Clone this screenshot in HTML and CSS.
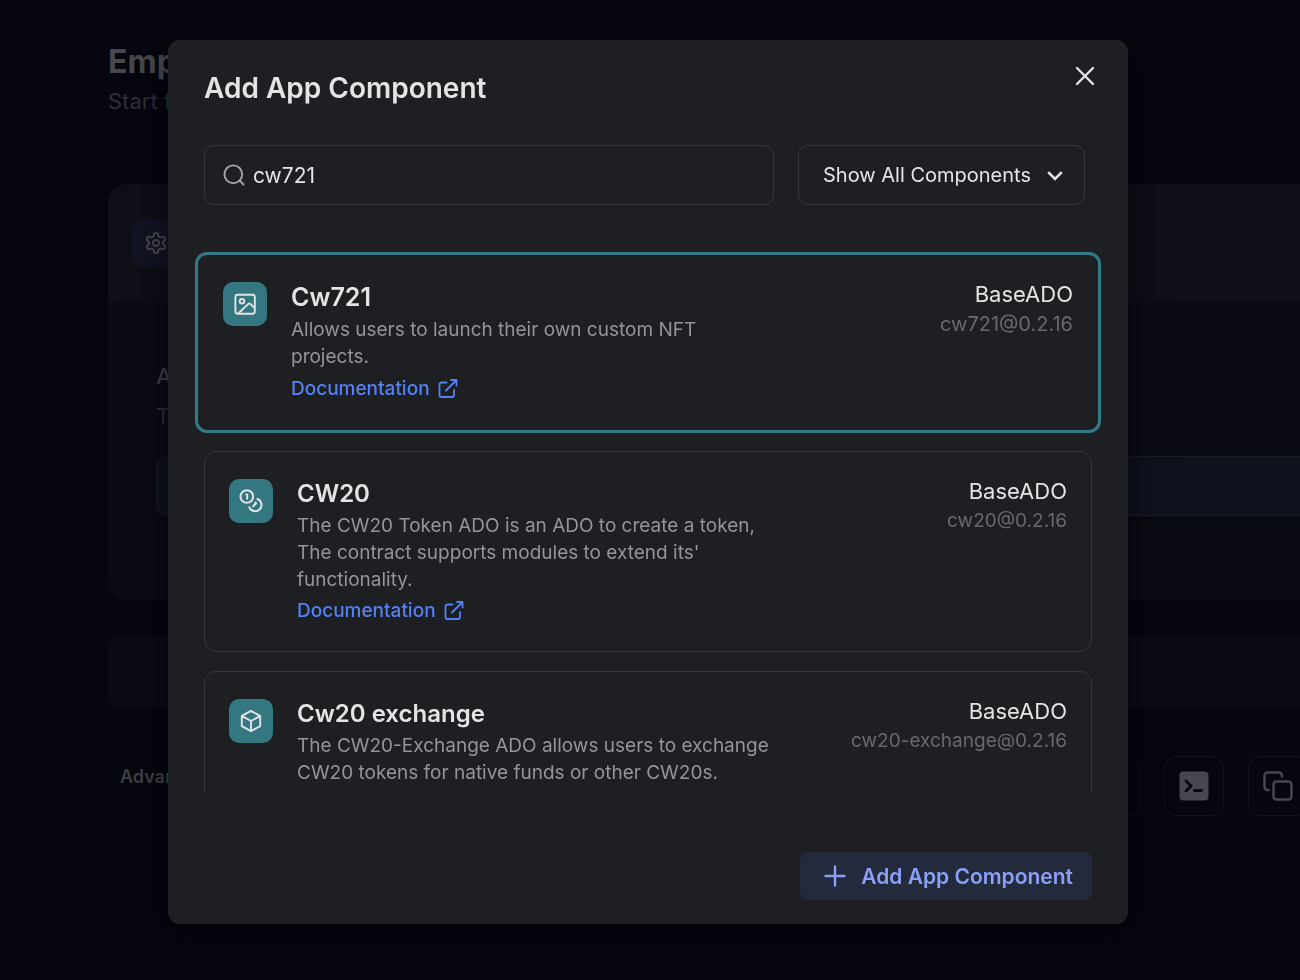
FILE: index.html
```html
<!DOCTYPE html>
<html lang="en">
<head>
<meta charset="utf-8">
<meta name="viewport" content="width=device-width, initial-scale=1">
<title>Add App Component</title>
<link rel="stylesheet" href="styles.css">
</head>
<body>
<main class="page" aria-hidden="true">
  <header class="page-head">
    <h1 class="page-title">Empty</h1>
    <p class="page-subtitle">Start from</p>
  </header>
  <section class="panel">
    <div class="panel-head">
      <span class="panel-icon">
        <svg width="24" height="24" viewBox="0 0 24 24" fill="none" stroke="currentColor" stroke-width="2" stroke-linecap="round" stroke-linejoin="round"><path d="M12.22 2h-.44a2 2 0 0 0-2 2v.18a2 2 0 0 1-1 1.73l-.43.25a2 2 0 0 1-2 0l-.15-.08a2 2 0 0 0-2.73.73l-.22.38a2 2 0 0 0 .73 2.73l.15.1a2 2 0 0 1 1 1.72v.51a2 2 0 0 1-1 1.74l-.15.09a2 2 0 0 0-.73 2.73l.22.38a2 2 0 0 0 2.73.73l.15-.08a2 2 0 0 1 2 0l.43.25a2 2 0 0 1 1 1.73V20a2 2 0 0 0 2 2h.44a2 2 0 0 0 2-2v-.18a2 2 0 0 1 1-1.73l.43-.25a2 2 0 0 1 2 0l.15.08a2 2 0 0 0 2.73-.73l.22-.39a2 2 0 0 0-.73-2.73l-.15-.08a2 2 0 0 1-1-1.74v-.5a2 2 0 0 1 1-1.74l.15-.09a2 2 0 0 0 .73-2.73l-.22-.38a2 2 0 0 0-2.73-.73l-.15.08a2 2 0 0 1-2 0l-.43-.25a2 2 0 0 1-1-1.73V4a2 2 0 0 0-2-2z"/><circle cx="12" cy="12" r="3"/></svg>
      </span>
    </div>
    <div class="panel-body">
      <h2 class="field-title">App</h2>
      <p class="field-hint">The</p>
      <div class="field-box"></div>
    </div>
  </section>
  <section class="strip"></section>
  <footer class="page-foot">
    <span class="foot-label">Advanced</span>
    <div class="foot-tools">
      <span class="tool"></span>
      <span class="tool">
        <svg width="30" height="30" viewBox="0 0 30 30"><rect x="0.500" y="0.500" width="29" height="29" rx="4" fill="currentColor"/><path d="M7 10l5 5-5 5M15.500 19.500h7" fill="none" stroke="#05060f" stroke-width="2.800" stroke-linecap="round" stroke-linejoin="round"/></svg>
      </span>
      <span class="tool">
        <svg width="30" height="30" viewBox="0 0 30 30" fill="none" stroke="currentColor" stroke-width="2.500" stroke-linecap="round" stroke-linejoin="round"><rect x="10.500" y="10.500" width="18" height="18" rx="3"/><path d="M5.500 19H4.500a3 3 0 0 1-3-3V4.500a3 3 0 0 1 3-3H16a3 3 0 0 1 3 3v1"/></svg>
      </span>
    </div>
  </footer>
</main>

<div class="overlay">
  <section class="modal" role="dialog" aria-modal="true" aria-labelledby="modal-title">
    <header class="modal-head">
      <h2 class="modal-title" id="modal-title">Add App Component</h2>
      <button class="close" type="button" aria-label="Close">
        <svg width="20" height="20" viewBox="0 0 20 20" fill="none" stroke="currentColor" stroke-width="2.400" stroke-linecap="round"><path d="M2 2l16 16M18 2L2 18"/></svg>
      </button>
    </header>

    <div class="filters">
      <label class="search">
        <svg width="24" height="24" viewBox="0 0 24 24" fill="none" stroke="currentColor" stroke-width="1.900" stroke-linecap="round" stroke-linejoin="round"><circle cx="11.300" cy="11.300" r="8.900"/><path d="M21.500 21.500l-3.800-3.800"/></svg>
        <input class="search-input" type="text" value="cw721" aria-label="Search components">
      </label>
      <div class="picker">
        <select class="picker-select" aria-label="Component filter"><option>Show All Components</option></select>
        <svg class="picker-arrow" width="16" height="10" viewBox="0 0 16 10" fill="none" stroke="currentColor" stroke-width="2.600"><path d="M1.200 1.200L8 8l6.800-6.800"/></svg>
      </div>
    </div>

    <div class="list">
      <article class="card card-selected">
        <span class="card-icon">
          <svg width="24" height="24" viewBox="0 0 24 24" fill="none" stroke="currentColor" stroke-width="1.900" stroke-linecap="round" stroke-linejoin="round"><rect x="2.400" y="2.700" width="19.400" height="19" rx="2.200"/><circle cx="9" cy="9.300" r="2.300"/><path d="M5.500 21.300l9.600-9.200q1.200-1 2.400 0l4.100 3.900"/></svg>
        </span>
        <div class="card-text">
          <h3 class="card-title">Cw721</h3>
          <p class="card-desc">Allows users to launch their own custom NFT projects.</p>
          <a class="doc" href="#cw721">Documentation
            <svg width="20" height="20" viewBox="0 0 20 20" fill="none" stroke="currentColor" stroke-width="1.800" stroke-linecap="round" stroke-linejoin="round"><path d="M8.500 3.500H3.500a2 2 0 0 0-2 2V16a2 2 0 0 0 2 2H14a2 2 0 0 0 2-2v-5M13 1h5.500v5.500M18.500 1L8 11.500"/></svg>
          </a>
        </div>
        <div class="card-meta">
          <span class="card-base">BaseADO</span>
          <span class="card-version">cw721@0.2.16</span>
        </div>
      </article>

      <article class="card">
        <span class="card-icon">
          <svg width="24" height="24" viewBox="0 0 24 24" fill="none" stroke="currentColor" stroke-width="2" stroke-linecap="round" stroke-linejoin="round"><circle cx="7.800" cy="7.500" r="6.300"/><path d="M18.400 10a6.300 6.300 0 1 1-8 8.300M7.300 5.500h.9v4.200M16.300 13.600l.8.700-2.900 3"/></svg>
        </span>
        <div class="card-text">
          <h3 class="card-title">CW20</h3>
          <p class="card-desc">The CW20 Token ADO is an ADO to create a token, The contract supports modules to extend its' functionality.</p>
          <a class="doc" href="#cw20">Documentation
            <svg width="20" height="20" viewBox="0 0 20 20" fill="none" stroke="currentColor" stroke-width="1.800" stroke-linecap="round" stroke-linejoin="round"><path d="M8.500 3.500H3.500a2 2 0 0 0-2 2V16a2 2 0 0 0 2 2H14a2 2 0 0 0 2-2v-5M13 1h5.500v5.500M18.500 1L8 11.500"/></svg>
          </a>
        </div>
        <div class="card-meta">
          <span class="card-base">BaseADO</span>
          <span class="card-version">cw20@0.2.16</span>
        </div>
      </article>

      <article class="card">
        <span class="card-icon">
          <svg width="24" height="24" viewBox="0 0 24 24" fill="none" stroke="currentColor" stroke-width="1.900" stroke-linecap="round" stroke-linejoin="round"><path d="M12 1.800l9.200 5.100v10.200L12 22.200l-9.200-5.100V6.900zM2.800 6.900L12 12l9.200-5.100M12 12v10.200"/></svg>
        </span>
        <div class="card-text">
          <h3 class="card-title">Cw20 exchange</h3>
          <p class="card-desc">The CW20-Exchange ADO allows users to exchange CW20 tokens for native funds or other CW20s.</p>
        </div>
        <div class="card-meta">
          <span class="card-base">BaseADO</span>
          <span class="card-version">cw20-exchange@0.2.16</span>
        </div>
      </article>
    </div>

    <footer class="modal-foot">
      <button class="add" type="button">
        <svg width="22" height="22" viewBox="0 0 22 22" fill="none" stroke="currentColor" stroke-width="2.400" stroke-linecap="round"><path d="M11 1.500v19M1.500 11h19"/></svg>
        Add App Component
      </button>
    </footer>
  </section>
</div>
</body>
</html>
```
FILE: styles.css
```css
* { box-sizing: border-box; }

body {
  margin: 0;
  height: 100vh;
  overflow: hidden;
  background: #05060f;
  color: #e4e4e5;
  font-family: Inter, "Liberation Sans", sans-serif;
}

h1, h2, h3, p { margin: 0; }
svg { display: block; flex: none; }
button, input, select { font: inherit; color: inherit; }

/* Dimmed page behind the dialog */
.page {
  padding: 42px 0 0 108px;
  color: #47474f;
}
.page-head { height: 142px; }
.page-title { font-size: 32px; line-height: 40px; font-weight: 700; }
.page-subtitle { margin-top: 3px; font-size: 22px; line-height: 32px; color: #2f3037; }

.panel {
  height: 416px;
  border-radius: 20px 0 0 20px;
  background: #0a0b14;
  overflow: hidden;
}
.panel-head { padding: 35px 24px; height: 118px; background: #0e0f17; }
.panel-icon {
  display: grid;
  place-items: center;
  width: 48px;
  height: 48px;
  border-radius: 12px;
  background: #131423;
}
.panel-body { padding: 60px 0 0 48px; }
.field-title { font-size: 22px; line-height: 28px; font-weight: 500; color: #3a3b41; }
.field-hint { margin-top: 12px; font-size: 22px; line-height: 28px; color: #2f3036; }
.field-box {
  margin-top: 26px;
  height: 60px;
  border: 1px solid #191b24;
  border-right: 0;
  border-radius: 12px 0 0 12px;
  background: #0e121d;
}
.strip {
  margin-top: 36px;
  height: 72px;
  border-radius: 12px 0 0 12px;
  background: #0a0b14;
}
.page-foot { display: flex; margin-top: 48px; padding-left: 12px; }
.foot-label { flex: 1; font-size: 18px; line-height: 42px; font-weight: 600; color: #3f4047; }
.foot-tools { display: flex; gap: 24px; margin-right: -8px; }
.tool {
  display: grid;
  place-items: center;
  width: 60px;
  height: 60px;
  border: 1px solid #12131b;
  border-radius: 12px;
}

/* Dialog */
.overlay {
  position: fixed;
  inset: 0;
  display: flex;
  justify-content: center;
  align-items: flex-start;
  padding: 40px 4px 0 0;
}
.modal {
  width: 100%;
  max-width: 960px;
  padding: 26px 36px 24px;
  border-radius: 12px;
  background: #1e1f23;
  box-shadow: 0 10px 40px rgba(0, 0, 0, 0.5);
}
.modal-head { display: flex; justify-content: space-between; align-items: flex-start; }
.modal-title { font-size: 28px; line-height: 44px; font-weight: 600; }
.close { padding: 0; margin-right: -3px; border: 0; background: none; }

.filters { display: flex; gap: 24px; margin-top: 35px; padding-right: 7px; }
.search, .picker { height: 60px; border: 1px solid #37383c; border-radius: 10px; }
.search { flex: 1; display: flex; align-items: center; gap: 7px; padding: 0 17px; }
.search svg { color: #a5a5a7; }
.search-input { flex: 1; min-width: 0; padding: 0; border: 0; outline: 0; background: none; font-size: 21px; }
.picker { position: relative; width: 287px; }
.picker-select {
  width: 100%;
  height: 100%;
  padding: 0 40px 0 24px;
  border: 0;
  outline: 0;
  appearance: none;
  background: none;
  font-size: 20px;
}
.picker-arrow { position: absolute; right: 21px; top: 25px; pointer-events: none; }

.list {
  height: 540px;
  margin: 47px -12px 0;
  padding: 0 12px;
  overflow: hidden;
}
.card {
  display: flex;
  gap: 24px;
  margin-bottom: 19px;
  padding: 27px 24px;
  border: 1px solid #37383c;
  border-radius: 12px;
}
.card-icon {
  display: grid;
  place-items: center;
  flex: none;
  width: 44px;
  height: 44px;
  border-radius: 10px;
  background: #347781;
}
.card-text { flex: 1; max-width: 484px; }
.card-title { font-size: 24px; line-height: 30px; font-weight: 600; }
.card-desc { margin-top: 3px; font-size: 19px; line-height: 27px; color: #949597; }
.doc {
  display: inline-flex;
  align-items: center;
  gap: 8px;
  margin-top: 4px;
  font-size: 19px;
  line-height: 27px;
  font-weight: 500;
  color: #5481f5;
  text-decoration: none;
}
.card-meta { display: flex; flex-direction: column; margin: -2px 0 0 auto; text-align: right; }
.card-base { font-size: 22px; line-height: 28px; }
.card-version { margin-top: 2px; font-size: 19px; line-height: 28px; color: #68696c; }

.card-selected {
  margin: 0 -9px 18px;
  padding: 27px 25px 28px;
  border: 3px solid #347a86;
}
.card-selected .card-title { font-size: 25px; }
.card-selected .card-desc { margin-top: 4px; }
.card-selected .doc { margin-top: 5px; }
.card-selected .card-version { font-size: 20px; }

.modal-foot { display: flex; justify-content: flex-end; margin-top: 60px; }
.add {
  display: flex;
  align-items: center;
  gap: 15px;
  height: 48px;
  padding: 0 19px 0 24px;
  border: 0;
  border-radius: 8px;
  background: #232a3b;
  color: #8aa0f8;
  font-size: 21px;
  font-weight: 600;
}
```
